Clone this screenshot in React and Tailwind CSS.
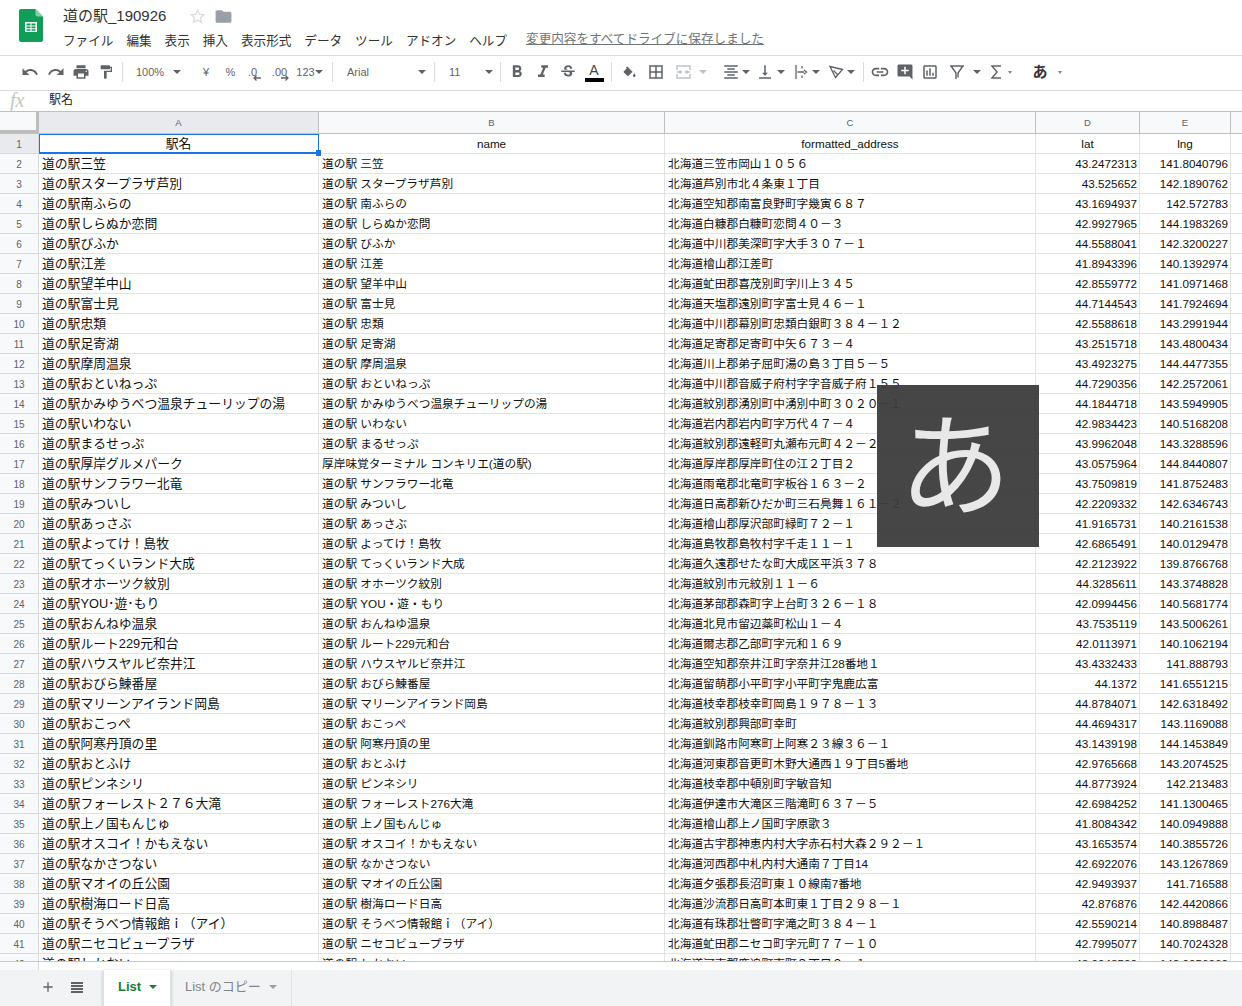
import React from "react";
import {
  MdUndo,
  MdRedo,
  MdPrint,
  MdFormatPaint,
  MdFormatBold,
  MdFormatItalic,
  MdStrikethroughS,
  MdBorderAll,
  MdFormatAlignCenter,
  MdVerticalAlignBottom,
  MdLink,
  MdAddComment,
  MdOutlineInsertChart,
  MdStarBorder,
  MdFolder,
  MdAdd,
} from "react-icons/md";

const FONT = "font-['Liberation_Sans','Noto_Sans_CJK_JP',sans-serif]";
const COLS = "grid-cols-[39px_280px_346px_371px_104px_91px_11px]";

const rows = [
  ["道の駅三笠", null, "北海道三笠市岡山１０５６", "43.2472313", "141.8040796"],
  ["道の駅スタープラザ芦別", null, "北海道芦別市北４条東１丁目", "43.525652", "142.1890762"],
  ["道の駅南ふらの", null, "北海道空知郡南富良野町字幾寅６８７", "43.1694937", "142.572783"],
  ["道の駅しらぬか恋問", null, "北海道白糠郡白糠町恋問４０－３", "42.9927965", "144.1983269"],
  ["道の駅びふか", null, "北海道中川郡美深町字大手３０７－１", "44.5588041", "142.3200227"],
  ["道の駅江差", null, "北海道檜山郡江差町", "41.8943396", "140.1392974"],
  ["道の駅望羊中山", null, "北海道虻田郡喜茂別町字川上３４５", "42.8559772", "141.0971468"],
  ["道の駅富士見", null, "北海道天塩郡遠別町字富士見４６－１", "44.7144543", "141.7924694"],
  ["道の駅忠類", null, "北海道中川郡幕別町忠類白銀町３８４－１２", "42.5588618", "143.2991944"],
  ["道の駅足寄湖", null, "北海道足寄郡足寄町中矢６７３－４", "43.2515718", "143.4800434"],
  ["道の駅摩周温泉", null, "北海道川上郡弟子屈町湯の島３丁目５－５", "43.4923275", "144.4477355"],
  ["道の駅おといねっぷ", null, "北海道中川郡音威子府村字字音威子府１５５", "44.7290356", "142.2572061"],
  ["道の駅かみゆうべつ温泉チューリップの湯", null, "北海道紋別郡湧別町中湧別中町３０２０－１", "44.1844718", "143.5949905"],
  ["道の駅いわない", null, "北海道岩内郡岩内町字万代４７－４", "42.9834423", "140.5168208"],
  ["道の駅まるせっぷ", null, "北海道紋別郡遠軽町丸瀬布元町４２－２", "43.9962048", "143.3288596"],
  ["道の駅厚岸グルメパーク", "厚岸味覚ターミナル コンキリエ(道の駅)", "北海道厚岸郡厚岸町住の江２丁目２", "43.0575964", "144.8440807"],
  ["道の駅サンフラワー北竜", null, "北海道雨竜郡北竜町字板谷１６３－２", "43.7509819", "141.8752483"],
  ["道の駅みついし", null, "北海道日高郡新ひだか町三石鳧舞１６１－２", "42.2209332", "142.6346743"],
  ["道の駅あっさぶ", null, "北海道檜山郡厚沢部町緑町７２－１", "41.9165731", "140.2161538"],
  ["道の駅よってけ！島牧", null, "北海道島牧郡島牧村字千走１１－１", "42.6865491", "140.0129478"],
  ["道の駅てっくいランド大成", null, "北海道久遠郡せたな町大成区平浜３７８", "42.2123922", "139.8766768"],
  ["道の駅オホーツク紋別", null, "北海道紋別市元紋別１１－６", "44.3285611", "143.3748828"],
  ["道の駅YOU･遊･もり", "道の駅 YOU・遊・もり", "北海道茅部郡森町字上台町３２６－１８", "42.0994456", "140.5681774"],
  ["道の駅おんねゆ温泉", null, "北海道北見市留辺蘂町松山１－４", "43.7535119", "143.5006261"],
  ["道の駅ルート229元和台", null, "北海道爾志郡乙部町字元和１６９", "42.0113971", "140.1062194"],
  ["道の駅ハウスヤルビ奈井江", null, "北海道空知郡奈井江町字奈井江28番地１", "43.4332433", "141.888793"],
  ["道の駅おびら鰊番屋", null, "北海道留萌郡小平町字小平町字鬼鹿広富", "44.1372", "141.6551215"],
  ["道の駅マリーンアイランド岡島", null, "北海道枝幸郡枝幸町岡島１９７８－１３", "44.8784071", "142.6318492"],
  ["道の駅おこっぺ", null, "北海道紋別郡興部町幸町", "44.4694317", "143.1169088"],
  ["道の駅阿寒丹頂の里", null, "北海道釧路市阿寒町上阿寒２３線３６－１", "43.1439198", "144.1453849"],
  ["道の駅おとふけ", null, "北海道河東郡音更町木野大通西１９丁目5番地", "42.9765668", "143.2074525"],
  ["道の駅ピンネシリ", null, "北海道枝幸郡中頓別町字敏音知", "44.8773924", "142.213483"],
  ["道の駅フォーレスト２７６大滝", "道の駅 フォーレスト276大滝", "北海道伊達市大滝区三階滝町６３７－５", "42.6984252", "141.1300465"],
  ["道の駅上ノ国もんじゅ", null, "北海道檜山郡上ノ国町字原歌３", "41.8084342", "140.0949888"],
  ["道の駅オスコイ！かもえない", null, "北海道古宇郡神恵内村大字赤石村大森２９２－１", "43.1653574", "140.3855726"],
  ["道の駅なかさつない", null, "北海道河西郡中札内村大通南７丁目14", "42.6922076", "143.1267869"],
  ["道の駅マオイの丘公園", null, "北海道夕張郡長沼町東１０線南7番地", "42.9493937", "141.716588"],
  ["道の駅樹海ロード日高", null, "北海道沙流郡日高町本町東１丁目２９８－１", "42.876876", "142.4420866"],
  ["道の駅そうべつ情報館ｉ（アイ）", null, "北海道有珠郡壮瞥町字滝之町３８４－１", "42.5590214", "140.8988487"],
  ["道の駅ニセコビュープラザ", null, "北海道虻田郡ニセコ町字元町７７－１０", "42.7995077", "140.7024328"],
  ["道の駅しかおい", null, "北海道河東郡鹿追町東町３丁目２－１", "43.0948500", "142.9956060"],
];

const menus = [
  "ファイル",
  "編集",
  "表示",
  "挿入",
  "表示形式",
  "データ",
  "ツール",
  "アドオン",
  "ヘルプ",
];

const Caret = ({ color = "border-t-[#5f6368]" }) => (
  <span className={`block h-0 w-0 shrink-0 border-x-[4px] border-t-[4px] border-x-transparent ${color}`} />
);

const SmallCaret = () => (
  <span className="block h-0 w-0 shrink-0 border-x-[2.5px] border-t-[3px] border-x-transparent border-t-[#80868b]" />
);

const Slot = ({ className, children }) => (
  <div className={`flex h-full shrink-0 items-center justify-center ${className}`}>{children}</div>
);

const Sep = () => <span className="block h-[20px] w-px shrink-0 bg-[#dadce0]" />;

const SheetsLogo = () => (
  <svg width="24" height="33" viewBox="0 0 24 33" className="shrink-0">
    <path d="M2 0h14.5L24 7.5V31a2 2 0 0 1-2 2H2a2 2 0 0 1-2-2V2a2 2 0 0 1 2-2z" fill="#0f9d58" />
    <path d="M16.5 0L24 7.5h-5.5a2 2 0 0 1-2-2z" fill="#87ceac" />
    <path d="M6 13h12v10H6z" fill="#fff" />
    <path d="M7.5 14.5h4v2h-4zM12.5 14.5h4v2h-4zM7.5 17.5h4v1.8h-4zM12.5 17.5h4v1.8h-4zM7.5 20.3h4v1.5h-4zM12.5 20.3h4v1.5h-4z" fill="#0f9d58" />
  </svg>
);

const IconMerge = () => (
  <svg width="15" height="14" viewBox="0 0 15 14" fill="none" stroke="#bdc1c6" strokeWidth="1.4">
    <path d="M1 5V1h13v4M1 9v4h13V9M1 7h4M3.5 5.5L5.5 7l-2 1.5M14 7h-4M11.5 5.5L9.5 7l2 1.5" />
  </svg>
);

const IconWrap = () => (
  <svg width="13" height="14" viewBox="0 0 13 14" fill="none" stroke="#5f6368" strokeWidth="1.3">
    <path d="M1 0v14M7 1v2.5M7 10.5V13M2.5 7h6.5M9 5l2.5 2L9 9" />
  </svg>
);

const IconRotate = () => (
  <svg width="15" height="14" viewBox="0 0 15 14" fill="none" stroke="#5f6368" strokeWidth="1.3">
    <path d="M1 1.5l12.5 3-7 8zM4.5 5.5L9 10" />
  </svg>
);

const IconFill = () => (
  <svg width="13" height="13" viewBox="0 0 15 15" fill="#5f6368">
    <path d="M5 0.5l6 6.2-4.6 4.6a1 1 0 0 1-1.4 0L1 7.4a1 1 0 0 1 0-1.4L4.2 2.8 3.4 2zM13 8.5s1.5 1.8 1.5 2.8a1.5 1.5 0 0 1-3 0c0-1 1.5-2.8 1.5-2.8z" />
  </svg>
);

const IconFilter = () => (
  <svg width="14" height="15" viewBox="0 0 14 15" fill="none" stroke="#5f6368" strokeWidth="1.4">
    <path d="M0 1h14M1.5 1.5L6 8v6M12.5 1.5L8 8v4.5" />
  </svg>
);

const IconSigma = () => (
  <svg width="10" height="14" viewBox="0 0 10 14" fill="none" stroke="#5f6368" strokeWidth="1.4" className="shrink-0">
    <path d="M10 1H1l5 6-5 6h9" />
  </svg>
);

const ArrowLeft = ({ className }) => (
  <svg width="8" height="6" viewBox="0 0 8 6" fill="none" stroke="#5f6368" strokeWidth="1.3" className={className}>
    <path d="M8 3H1M3.5 0.5L1 3l2.5 2.5" />
  </svg>
);

const ArrowRight = ({ className }) => (
  <svg width="8" height="6" viewBox="0 0 8 6" fill="none" stroke="#5f6368" strokeWidth="1.3" className={className}>
    <path d="M0 3h7M4.5 0.5L7 3 4.5 5.5" />
  </svg>
);

const IconList = () => (
  <svg width="12" height="11" viewBox="0 0 12 11" fill="#5f6368" className="ml-[15px]">
    <path d="M0 0h12v2H0zM0 3h12v2H0zM0 6h12v2H0zM0 9h12v2H0z" />
  </svg>
);

const Toolbar = () => (
  <div className="flex h-[35px] items-center border-b border-[#dadce0] pb-[2px] pl-[17px] text-[11px] text-[#5f6368]">
    <Slot className="w-[26px]"><MdUndo size={18} /></Slot>
    <Slot className="w-[25px]"><MdRedo size={18} /></Slot>
    <Slot className="w-[26px]"><MdPrint size={18} /></Slot>
    <Slot className="w-[24px]"><MdFormatPaint size={16} /></Slot>
    <Slot className="w-[9px]"><Sep /></Slot>
    <Slot className="w-[46px]">100%</Slot>
    <Slot className="w-[8px]"><Caret /></Slot>
    <Slot className="w-[13px]" />
    <Slot className="w-[24px]">¥</Slot>
    <Slot className="w-[25px]">%</Slot>
    <Slot className="w-[19px]">
      <span className="relative">
        .0
        <ArrowLeft className="absolute left-[5px] top-[11px]" />
      </span>
    </Slot>
    <Slot className="w-[35px]">
      <span className="relative">
        .00
        <ArrowRight className="absolute left-[9px] top-[11px]" />
      </span>
    </Slot>
    <Slot className="w-[17px]">123</Slot>
    <Slot className="w-[9px]"><Caret /></Slot>
    <Slot className="w-[18px]"><Sep /></Slot>
    <Slot className="w-[75px] justify-start! pl-[6px]">Arial</Slot>
    <Slot className="w-[12px]"><Caret /></Slot>
    <Slot className="w-[12px]"><Sep /></Slot>
    <Slot className="w-[43px] justify-start! pl-[9px]">11</Slot>
    <Slot className="w-[12px]"><Caret /></Slot>
    <Slot className="w-[11px]"><Sep /></Slot>
    <Slot className="w-[22px]"><MdFormatBold size={20} /></Slot>
    <Slot className="w-[30px]"><MdFormatItalic size={20} /></Slot>
    <Slot className="w-[20px]"><MdStrikethroughS size={18} /></Slot>
    <Slot className="w-[32px]">
      <span className="flex flex-col items-center">
        <span className="text-[14px] leading-[14px] text-[#444]">A</span>
        <span className="mt-[1px] block h-[4px] w-[19px] bg-black" />
      </span>
    </Slot>
    <Slot className="w-[2px]"><Sep /></Slot>
    <Slot className="w-[34px]"><IconFill /></Slot>
    <Slot className="w-[20px]"><MdBorderAll size={18} /></Slot>
    <Slot className="w-[34px]"><IconMerge /></Slot>
    <Slot className="w-[6px]"><Caret color="border-t-[#bdc1c6]" /></Slot>
    <Slot className="w-[14px]" />
    <Slot className="w-[21px]"><MdFormatAlignCenter size={18} /></Slot>
    <Slot className="w-[10px]"><Caret /></Slot>
    <Slot className="w-[28px]"><MdVerticalAlignBottom size={18} /></Slot>
    <Slot className="w-[4px]"><Caret /></Slot>
    <Slot className="w-[10px]" />
    <Slot className="w-[16px]"><IconWrap /></Slot>
    <Slot className="w-[14px]"><Caret /></Slot>
    <Slot className="w-[26px]"><IconRotate /></Slot>
    <Slot className="w-[4px]"><Caret /></Slot>
    <Slot className="w-[20px]"><Sep /></Slot>
    <Slot className="w-[14px]"><MdLink size={20} className="shrink-0" /></Slot>
    <Slot className="w-[36px]"><MdAddComment size={18} /></Slot>
    <Slot className="w-[14px]"><MdOutlineInsertChart size={18} className="shrink-0" /></Slot>
    <Slot className="w-[39px]"><IconFilter /></Slot>
    <Slot className="w-[2px]"><Caret /></Slot>
    <Slot className="w-[12px]" />
    <Slot className="w-[12px]"><IconSigma /></Slot>
    <Slot className="w-[16px]"><SmallCaret /></Slot>
    <Slot className="w-[15px]" />
    <Slot className="w-[14px] text-[15px] font-bold text-[#333]">あ</Slot>
    <Slot className="w-[26px]"><SmallCaret /></Slot>
  </div>
);

const ColHeader = ({ children }) => (
  <div className="flex h-full items-center justify-center border-r border-[#c0c0c0] pt-px text-[9.5px] text-[#5f6368]">
    {children}
  </div>
);

const Cell = ({ className = "", children }) => (
  <div className={`flex h-[20px] items-center overflow-hidden whitespace-nowrap border-r border-b border-[#e2e3e3] pt-px text-[#111] ${className}`}>
    {children}
  </div>
);

const RowNum = ({ n, active }) => (
  <div className={`flex h-[20px] items-center justify-center border-r border-b border-[#d8d9da] pt-px text-[10px] text-[#5f6368] ${active ? "bg-[#e8eaed]" : "bg-[#f8f9fa]"}`}>
    {n}
  </div>
);

const App = () => {
  return (
    <div className={`relative h-[1006px] w-[1242px] overflow-hidden bg-white ${FONT}`}>
      {/* title + menu */}
      <div className="flex h-[56px] border-b border-[#dadce0] pl-[19px] pt-[9px]">
        <SheetsLogo />
        <div className="ml-[20px]">
          <div className="flex h-[15px] items-center text-[15px] text-[#333]">
            <span className="w-[108px] whitespace-nowrap">道の駅_190926</span>
            <MdStarBorder size={19} className="ml-[17px] text-[#dadce0]" />
            <MdFolder size={19} className="ml-[7px] text-[#9aa0a6]" />
          </div>
          <div className="mt-[9px] flex items-center gap-[13px] text-[12.6px] leading-[16px] text-[#333]">
            {menus.map((m) => (
              <span key={m}>{m}</span>
            ))}
            <span className="ml-[6px] -translate-y-[2px] text-[#70757a] underline">変更内容をすべてドライブに保存しました</span>
          </div>
        </div>
      </div>

      <Toolbar />

      {/* formula bar */}
      <div className="flex h-[21px] items-center border-b border-[#c0c0c0] pb-[2px]">
        <span className="ml-[10px] w-[39px] font-['Liberation_Serif',serif] text-[20px] italic leading-none text-[#c4c7c5]">fx</span>
        <span className="text-[12px] text-[#222]">駅名</span>
      </div>

      {/* column letters */}
      <div className={`grid h-[22px] border-b border-[#c0c0c0] bg-[#f8f9fa] ${COLS}`}>
        <div className="border-b-[3px] border-r-[3px] border-[#bdbdbd] bg-[#f8f9fa]" />
        <div className="flex h-full items-center justify-center border-r border-[#c0c0c0] bg-[#e8eaed] pt-px text-[9.5px] text-[#5f6368]">A</div>
        <ColHeader>B</ColHeader>
        <ColHeader>C</ColHeader>
        <ColHeader>D</ColHeader>
        <ColHeader>E</ColHeader>
      </div>

      {/* sheet body */}
      <div className="h-[827px] overflow-hidden text-[11.7px]">
        <div className={`grid ${COLS}`}>
          <RowNum n={1} active />
          <Cell className="justify-center border-b-2 border-[#1a73e8]! text-[12.8px] outline-1 -outline-offset-1 outline-[#1a73e8]">
            駅名
          </Cell>
          <Cell className="justify-center">name</Cell>
          <Cell className="justify-center">formatted_address</Cell>
          <Cell className="justify-center">lat</Cell>
          <Cell className="justify-center">lng</Cell>
          <Cell className="border-r-0" />
        </div>
        {rows.map((r, i) => (
          <div key={i} className={`grid ${COLS}`}>
            <RowNum n={i + 2} />
            <Cell className="pl-[3px] text-[12.8px]">{r[0]}</Cell>
            <Cell className="pl-[3px]">{r[1] || r[0].replace("道の駅", "道の駅 ")}</Cell>
            <Cell className="pl-[3px]">{r[2]}</Cell>
            <Cell className="justify-end pr-[2px]">{r[3]}</Cell>
            <Cell className="justify-end pr-[2px]">{r[4]}</Cell>
            <Cell className="border-r-0" />
          </div>
        ))}
      </div>

      {/* scrollbar strip */}
      <div className="h-[9px] border-t border-[#c8c9ca]">
        <div className="h-full w-[39px] border-r border-[#d8d9da] bg-[#f8f9fa]" />
      </div>

      {/* sheet tabs */}
      <div className="flex h-[36px] bg-[#f1f3f4] text-[13px]">
        <div className="flex w-[103px] items-center pb-[2px] pl-[40px] text-[#5f6368]">
          <MdAdd size={16} />
          <IconList />
        </div>
        <div className="flex w-[68px] items-center border-x border-[#e0e2e4] bg-white pb-[2px] pl-[14px] font-bold text-[#188038] shadow-[0_1px_3px_rgba(60,64,67,0.3)]">
          List
          <span className="ml-[8px]"><Caret color="border-t-[#188038]" /></span>
        </div>
        <div className="flex w-[121px] items-center border-r border-[#e0e2e4] pb-[2px] pl-[14px] text-[#80868b]">
          List のコピー
          <span className="ml-[8px]"><Caret color="border-t-[#9aa0a6]" /></span>
        </div>
      </div>

      {/* selection handle */}
      <span className="absolute left-[316px] top-[150px] h-[6px] w-[5px] bg-[#1a73e8]" />

      {/* IME mode indicator */}
      <div className="absolute left-[877px] top-[385px] flex h-[162px] w-[162px] items-center justify-center bg-[#3c3c3c]/95 pr-[6px] pt-[6px] text-[112px] leading-none text-[#e8e8e8]">
        あ
      </div>
    </div>
  );
};

export default App;
